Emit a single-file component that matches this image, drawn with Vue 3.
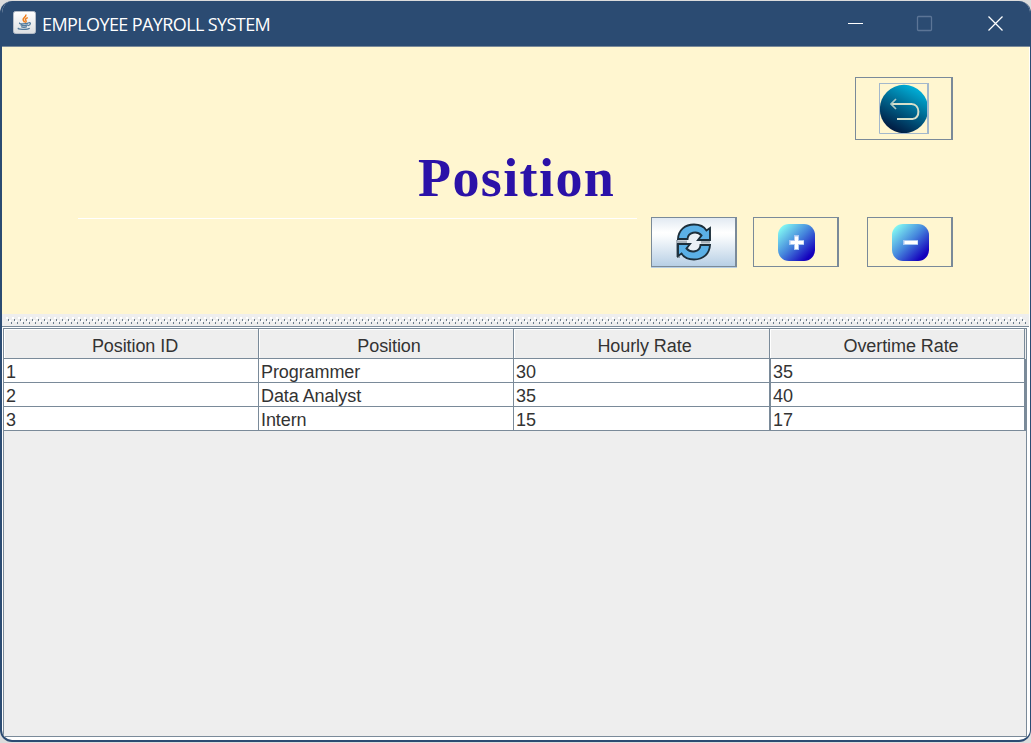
<script setup>
const columns = ['Position ID', 'Position', 'Hourly Rate', 'Overtime Rate']
const rows = [
  ['1', 'Programmer', '30', '35'],
  ['2', 'Data Analyst', '35', '40'],
  ['3', 'Intern', '15', '17'],
]
</script>

<template>
  <div class="window">
    <header class="titlebar">
      <svg class="java" width="23" height="23" viewBox="0 0 23 23">
        <defs>
          <linearGradient id="jbg" x1="0" y1="0" x2="0" y2="1">
            <stop offset="0" stop-color="#fff" /><stop offset="1" stop-color="#dcdfe2" />
          </linearGradient>
        </defs>
        <rect x=".5" y=".5" width="22" height="22" rx="2" fill="url(#jbg)" stroke="#b5bdc8" />
        <path d="M12.800 3.500c1 2.400-3.200 3.200-2.700 5.300.2.800 1.300 1.500 1.300 2.600M14.800 6.600c-2.200.9-3 1.800-1.900 3 .5.7.3 1.400-.7 2" fill="none" stroke="#ef7d1a" stroke-width="1.500" />
        <path d="M7 11.900c-2.500 1.100 5.700 1.200 8.200.2M7.600 13.800c1.800.8 5.200.8 7.300 0M8.200 15.600c1.500.8 4 .8 5.700 0M15.300 11.800c3-.8 2.600 2.300-.2 2.800M5.700 17c-3 1.500 8.800 2 11 .2" fill="none" stroke="#527a9c" stroke-width="1.300" />
      </svg>
      <span class="caption">EMPLOYEE PAYROLL SYSTEM</span>
      <svg class="controls" width="160" height="20" viewBox="0 0 160 20">
        <path d="M0 10.500H15" stroke="#fff" />
        <rect x="69.500" y="3.500" width="14" height="14" rx="1" fill="none" stroke="#5c7596" stroke-width="1.300" />
        <path d="M140.500 3.500L154.500 17.500M154.500 3.500L140.500 17.500" stroke="#fff" stroke-width="1.300" />
      </svg>
    </header>

    <section class="panel">
      <div class="top">
        <button class="btn back">
          <svg width="51" height="51" viewBox="0 0 51 51">
            <defs>
              <linearGradient id="bk" x1=".75" y1=".08" x2=".3" y2=".95">
                <stop offset="0" stop-color="#00add6" /><stop offset=".5" stop-color="#00628a" /><stop offset="1" stop-color="#001b42" />
              </linearGradient>
            </defs>
            <circle cx="25" cy="26" r="24.200" fill="url(#bk)" />
            <path d="M.5 0V50.500H48.500M0 .5H49" fill="none" stroke="#a3b8cc" />
            <path d="M49 0V51" stroke="#a3b8cc" stroke-width="2" />
            <path d="M12.500 21H32.500C41.500 21 41.500 36 33.500 36H18" fill="none" stroke="#d8dfc9" stroke-width="2" />
            <path d="M17 16L12 21L17 26" fill="none" stroke="#a8c9c6" stroke-width="1.700" />
          </svg>
        </button>
      </div>
      <h1>Position</h1>
      <div class="actions">
        <div class="rule"></div>
        <button class="btn refresh">
          <svg width="36" height="38" viewBox="0 0 36 38">
            <path d="M1 17V34M1 34H4" fill="none" stroke="#8e9ba6" stroke-width="2" />
            <circle cx="18" cy="19" r="8" fill="#eaf0f6" />
            <path d="M0 19H11M25 19H34" stroke="#a9b2bb" stroke-width="3" />
            <g fill="#5bb0e6" stroke="#1d2f3b" stroke-width="1.900">
              <path d="M2 16C2.500 7 9 1.500 18 1.500C24 1.500 28 3.500 30.500 7.500L34 5V17H22L25.500 12.500C21 7.500 12 9 11.500 16Z" />
              <path d="M34 22C33.500 31 27 36.500 18 36.500C12 36.500 8 34.500 5.500 30.500L2 33V21H14L10.500 25.500C15 30.500 24 29 24.500 22Z" />
            </g>
          </svg>
        </button>
        <button v-for="kind in ['plus', 'minus']" :key="kind" class="btn" :class="kind">
          <svg width="37" height="37" viewBox="0 0 37 37">
            <defs>
              <linearGradient :id="kind" x1="0.06" y1="0.06" x2=".9" y2=".9">
                <stop offset="0" stop-color="#85fff4" /><stop offset=".5" stop-color="#4585dc" /><stop offset=".95" stop-color="#1400bd" />
              </linearGradient>
            </defs>
            <rect width="37" height="37" rx="11" :fill="`url(#${kind})`" />
            <path d="M11 18.500H26" stroke="#a9c6f0" stroke-width="5" />
            <path v-if="kind === 'plus'" d="M18.500 11V26" stroke="#a9c6f0" stroke-width="5" />
            <path d="M12.500 18.500H25.500" stroke="#fff" stroke-width="3.200" />
            <path v-if="kind === 'plus'" d="M18.500 12.500V25" stroke="#fff" stroke-width="3.200" />
          </svg>
        </button>
      </div>
    </section>

    <div class="divider">
      <svg width="1026" height="7">
        <defs>
          <pattern id="bumps" width="6" height="7" patternUnits="userSpaceOnUse">
            <path d="M4 0h2v2h-2zM1 3h2v2h-2z" fill="#fff" />
            <path d="M0 2h1v2h-1zM3 5h1v2h-1z" fill="#6b7c8c" />
          </pattern>
        </defs>
        <rect x="4" width="1020" height="7" fill="url(#bumps)" shape-rendering="crispEdges" />
      </svg>
    </div>

    <div class="scroll">
      <div class="grid head">
        <div v-for="c in columns" :key="c" class="th">{{ c }}</div>
      </div>
      <div v-for="r in rows" :key="r[0]" class="grid row">
        <div v-for="(v, i) in r" :key="i" class="td">{{ v }}</div>
      </div>
    </div>
  </div>
</template>

<style>
body { margin: 0; background: #dcdcdc; overflow: hidden; }
</style>

<style scoped>
* { box-sizing: border-box; }
.window {
  width: 1031px; height: 741px; margin-top: 1px; overflow: hidden;
  display: flex; flex-direction: column; background: #fff;
  border: solid #2b4b72; border-width: 0 1px 2px 2px; border-radius: 12px;
}
.titlebar {
  height: 46px; flex: none; display: flex; align-items: flex-start;
  background: #2b4b72; border-bottom: 1px solid #7a8a99; margin-right: -1px;
}
.java { margin: 10px 0 0 11px; }
.caption {
  margin: 11px 0 0 6px; width: 240px; white-space: nowrap; color: #fff;
  font: 18px/24px "Open Sans", "Noto Sans", sans-serif; letter-spacing: -0.6px;
}
.controls { margin: 12px 0 0 566px; }
.panel {
  height: 267px; flex: none; margin-right: 1px; padding-top: 30px;
  background: #fff6d0; display: flex; flex-direction: column;
}
.top { display: flex; justify-content: flex-end; padding-right: 76px; height: 63px; }
.btn {
  display: flex; align-items: center; justify-content: center; padding: 0;
  border: 1px solid #7a8a99; border-right-width: 2px; background: transparent;
}
.btn svg { display: block; }
.back { width: 98px; height: 63px; }
.back svg { margin-left: 1px; }
h1 {
  margin: 6px 0 0; height: 71px; padding-left: 416px; color: #2b12a8;
  font: bold 54px/64px "Liberation Serif", serif; letter-spacing: 1.400px;
}
.actions { display: flex; align-items: flex-start; padding-left: 75px; }
.rule { width: 559px; height: 1px; margin: 1px 0 0 1px; background: #fff; }
.actions .btn { width: 86px; height: 50px; }
.actions .refresh {
  margin-left: 14px; box-shadow: 0 1px #b8cfe5;
  background: linear-gradient(#e2eaf2, #fff 30%, #fafcfd 38%, #b8cfe5);
}
.plus { margin-left: 16px; }
.minus { margin-left: 28px; }
.plus svg, .minus svg { margin-left: 2px; }
.divider {
  height: 13px; flex: none; background: #eee; padding-top: 3px; margin-right: 1px;
  border-bottom: 1px solid #7a8a99;
}
.divider svg { display: block; }
.scroll {
  margin: 1px 3px 3px 1px; flex: 1; background: #eee; border: 1px solid #7a8a99;
  color: #333; font: 18px/24px "Liberation Sans", Arial, sans-serif; letter-spacing: -0.08px;
}
.grid { display: grid; grid-template-columns: 255px 255px 256px 255px; }
.head { height: 30px; width: 1021px; grid-template-rows: 30px; }
.th {
  text-align: center; line-height: 34px; padding-left: 8px;
  border: solid #7a8a99; border-width: 0 1px 1px 0; box-shadow: inset 1px 1px #fff;
}
.th:nth-child(2), .th:nth-child(3) { padding-left: 6px; }
.row { height: 24px; grid-template-rows: 24px; background: #fff; border-right: 1px solid #7a8a99; }
.td { padding-left: 2px; line-height: 26px; border: solid #7a8a99; border-width: 0 1px 1px 0; }
.td:last-child { border-left-width: 1px; }
</style>
